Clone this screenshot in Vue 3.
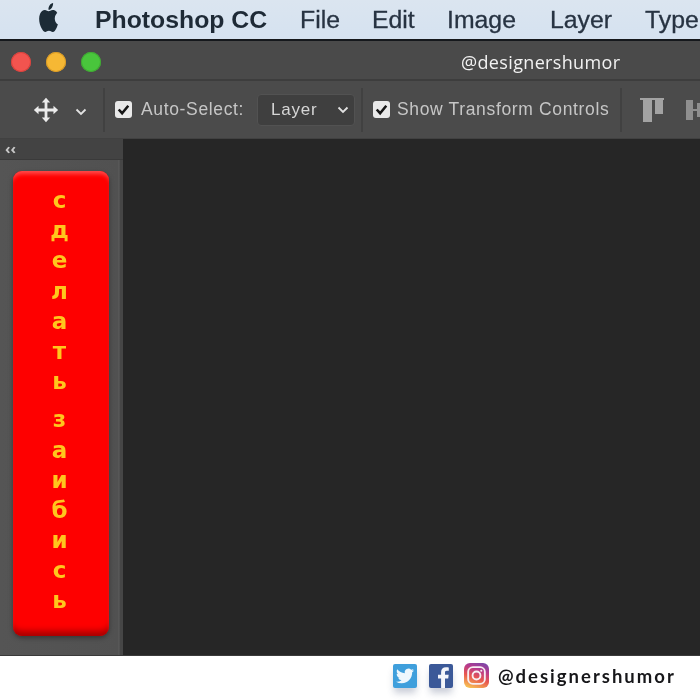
<script setup>
const word1 = ['с', 'д', 'е', 'л', 'а', 'т', 'ь']
const word2 = ['з', 'а', 'и', 'б', 'и', 'с', 'ь']
const menu = [
  { label: 'File', width: 72 },
  { label: 'Edit', width: 75 },
  { label: 'Image', width: 103 },
  { label: 'Layer', width: 95 },
  { label: 'Type', width: 60 }
]
</script>

<template>
  <div class="screen">
    <header class="menubar">
      <svg class="apple" viewBox="0 0 24 24" preserveAspectRatio="none" aria-hidden="true">
        <path d="M12.152 6.896c-.948 0-2.415-1.078-3.96-1.04-2.04.027-3.91 1.183-4.961 3.014-2.117 3.675-.546 9.103 1.519 12.09 1.013 1.454 2.208 3.09 3.792 3.039 1.52-.065 2.09-.987 3.935-.987 1.831 0 2.35.987 3.96.948 1.637-.026 2.676-1.48 3.676-2.948 1.156-1.688 1.636-3.325 1.662-3.415-.039-.013-3.182-1.221-3.22-4.857-.026-3.04 2.48-4.494 2.597-4.559-1.429-2.09-3.623-2.324-4.39-2.376-2-.156-3.675 1.09-4.61 1.09zM15.53 3.83c.843-1.012 1.4-2.427 1.245-3.83-1.207.052-2.662.805-3.532 1.818-.78.896-1.454 2.338-1.273 3.714 1.338.104 2.715-.688 3.559-1.701" />
      </svg>
      <span class="app-name">Photoshop CC</span>
      <span v-for="m in menu" :key="m.label" class="menu-item" :style="{ width: m.width + 'px' }">{{ m.label }}</span>
    </header>

    <div class="titlebar">
      <span class="light red"></span>
      <span class="light yellow"></span>
      <span class="light green"></span>
      <span class="handle">@designershumor</span>
    </div>

    <div class="toolbar">
      <svg class="move" viewBox="0 0 30 30" aria-hidden="true">
        <path d="M15 2l4.500 5h-3v6.500h6.500v-3l5 4.500-5 4.500v-3h-6.500v6.500h3l-4.500 5-4.500-5h3v-6.500h-6.500v3l-5-4.500 5-4.500v3h6.500v-6.500h-3z" />
      </svg>
      <svg class="chev chev-tool" viewBox="0 0 12 8" aria-hidden="true"><path d="M1.500 1.500L6 6l4.500-4.500" /></svg>
      <span class="sep sep-a"></span>
      <span class="check">
        <svg viewBox="0 0 16 16" aria-hidden="true"><path d="M3.500 8l3.200 3.500L12.500 4.500" /></svg>
      </span>
      <span class="tool-label auto">Auto-Select:</span>
      <div class="select">
        <span>Layer</span>
        <svg class="chev" viewBox="0 0 12 8" aria-hidden="true"><path d="M1.500 1.500L6 6l4.500-4.500" /></svg>
      </div>
      <span class="sep sep-b"></span>
      <span class="check">
        <svg viewBox="0 0 16 16" aria-hidden="true"><path d="M3.500 8l3.200 3.500L12.500 4.500" /></svg>
      </span>
      <span class="tool-label show">Show Transform Controls</span>
      <span class="sep sep-c"></span>
      <svg class="align-top" viewBox="0 0 24 24" aria-hidden="true">
        <path d="M0 0h24v2H0zM3 2h9v22H3zM15 2h8v14h-8z" />
      </svg>
      <svg class="align-mid" viewBox="0 0 18 24" aria-hidden="true">
        <path d="M0 2h7v20H0zM7 11h4v2H7zM11 5h7v14h-7z" />
      </svg>
    </div>

    <main class="workspace">
      <aside class="dock">
        <div class="dock-head">‹‹</div>
        <div class="dock-body">
          <div class="red-panel">
            <span v-for="(l, i) in word1" :key="'a' + i" class="letter">{{ l }}</span>
            <span class="word-gap"></span>
            <span v-for="(l, i) in word2" :key="'b' + i" class="letter">{{ l }}</span>
          </div>
        </div>
      </aside>
      <div class="canvas"></div>
    </main>

    <footer class="footer">
      <span class="social twitter">
        <svg viewBox="0 0 24 24" aria-hidden="true">
          <path d="M23.953 4.570a10 10 0 01-2.825.775 4.958 4.958 0 002.163-2.723c-.951.555-2.005.959-3.127 1.184a4.920 4.920 0 00-8.384 4.482C7.690 8.095 4.067 6.130 1.640 3.162a4.822 4.822 0 00-.666 2.475c0 1.710.870 3.213 2.188 4.096a4.904 4.904 0 01-2.228-.616v.060a4.923 4.923 0 003.946 4.827 4.996 4.996 0 01-2.212.085 4.936 4.936 0 004.604 3.417 9.867 9.867 0 01-6.102 2.105c-.390 0-.779-.023-1.170-.067a13.995 13.995 0 007.557 2.209c9.053 0 13.998-7.496 13.998-13.985 0-.210 0-.420-.015-.630A9.935 9.935 0 0024 4.590z" />
        </svg>
      </span>
      <span class="social facebook">
        <svg viewBox="0 0 24 24" aria-hidden="true">
          <path d="M16 24v-9.500h3.200l.5-3.700H16V8.500c0-1.100.3-1.800 1.800-1.800h2V3.400c-.4 0-1.500-.2-2.900-.2-2.900 0-4.800 1.700-4.800 5v2.600H9v3.700h3.100V24z" />
        </svg>
      </span>
      <span class="social instagram">
        <svg viewBox="0 0 24 24" aria-hidden="true">
          <rect x="4" y="4" width="16" height="16" rx="4.500" />
          <circle cx="12" cy="12" r="3.800" />
          <circle class="dot" cx="16.600" cy="7.400" r="1" />
        </svg>
      </span>
      <span class="footer-handle">@designershumor</span>
    </footer>
  </div>
</template>

<style scoped>
.screen {
  width: 700px;
  height: 700px;
  overflow: hidden;
  display: flex;
  flex-direction: column;
  background: #fff;
  font-family: "Open Sans", "Liberation Sans", sans-serif;
  filter: blur(0.5px);
}

/* menu bar */
.menubar {
  flex: 0 0 41px;
  box-sizing: border-box;
  display: flex;
  align-items: center;
  padding-left: 37px;
  background: linear-gradient(#dbe5f0, #d5e2f0);
  border-bottom: 2px solid #15181c;
  color: #1e2a36;
  white-space: nowrap;
  overflow: hidden;
}
.apple {
  width: 23px;
  height: 29px;
  margin-top: -5px;
  fill: #1c2b36;
  flex: none;
}
.app-name {
  flex: none;
  width: 205px;
  margin-left: 35px;
  font-family: "Liberation Sans", sans-serif;
  font-size: 24.800px;
  font-weight: 700;
}
.menu-item {
  flex: none;
  font-family: "Liberation Sans", sans-serif;
  font-size: 24.800px;
  color: #273342;
  -webkit-text-stroke: 0.300px #273342;
}

/* title bar */
.titlebar {
  flex: 0 0 40px;
  box-sizing: border-box;
  display: flex;
  align-items: center;
  padding: 4px 0 0 11px;
  gap: 15px;
  background: #4a4a4a;
  border-bottom: 2px solid #3d3d3d;
}
.light {
  width: 20px;
  height: 20px;
  border-radius: 50%;
  flex: none;
}
.red { background: #f2544f; box-shadow: inset 0 0 0 1px #d8413c; }
.yellow { background: #f6b834; box-shadow: inset 0 0 0 1px #d99a25; }
.green { background: #49c53c; box-shadow: inset 0 0 0 1px #3fa833; }
.handle {
  margin-left: 345px;
  color: #f2f2f2;
  font-size: 18px;
  letter-spacing: 0.350px;
}

/* toolbar */
.toolbar {
  flex: 0 0 58px;
  box-sizing: border-box;
  display: flex;
  align-items: center;
  background: #4b4b4b;
  border-bottom: 1px solid #414141;
  white-space: nowrap;
  overflow: hidden;
}
.move {
  width: 28px;
  height: 28px;
  margin-left: 32px;
  fill: #ececec;
  flex: none;
}
.chev {
  width: 12px;
  height: 8px;
  fill: none;
  stroke: #e2e2e2;
  stroke-width: 1.800;
  flex: none;
}
.chev-tool { margin-left: 15px; margin-top: 4px; }
.sep {
  width: 2px;
  height: 44px;
  background: #414141;
  flex: none;
}
.sep-a { margin-left: 16px; }
.sep-b { margin-left: 6px; }
.sep-c { margin-left: 10px; }
.check {
  width: 17px;
  height: 17px;
  border-radius: 3px;
  background: #e9e9e9;
  flex: none;
  display: flex;
}
.check svg {
  width: 17px;
  height: 17px;
  fill: none;
  stroke: #161616;
  stroke-width: 2.400;
}
.sep-a + .check { margin-left: 10px; }
.sep-b + .check { margin-left: 10px; }
.tool-label {
  flex: none;
  color: #c6c6c6;
  font-family: "Liberation Sans", sans-serif;
  font-size: 17.500px;
  letter-spacing: 0.650px;
}
.auto { margin-left: 9px; width: 110px; }
.show { margin-left: 7px; width: 213px; }
.select {
  width: 98px;
  height: 32px;
  margin-left: 6px;
  padding: 0 5px 0 13px;
  box-sizing: border-box;
  display: flex;
  align-items: center;
  justify-content: space-between;
  background: #3f3f3f;
  border: 1px solid #525252;
  border-radius: 4px;
  color: #d6d6d6;
  font-family: "Liberation Sans", sans-serif;
  font-size: 17px;
  letter-spacing: 0.800px;
  flex: none;
}
.align-top {
  width: 24px;
  height: 24px;
  margin-left: 18px;
  fill: #a3a3a3;
  flex: none;
}
.align-mid {
  width: 18px;
  height: 24px;
  margin-left: 22px;
  fill: #8f8f8f;
  flex: none;
}

/* workspace */
.workspace {
  flex: 0 0 516px;
  display: flex;
  background: #262626;
}
.dock {
  width: 123px;
  flex: none;
  display: flex;
  flex-direction: column;
  background: #484848;
}
.dock-head {
  height: 21px;
  box-sizing: border-box;
  padding: 0 0 3px 5px;
  font-size: 15px;
  line-height: 18px;
  font-weight: 700;
  color: #c8c8c8;
  background: #434343;
  border-bottom: 1px solid #3a3a3a;
}
.dock-body {
  flex: 1;
  box-sizing: border-box;
  padding: 11px 0 19px 13px;
  background: linear-gradient(90deg, #555 0, #515151 118px, #5d5d5d 119px, #464646 120px);
}
.red-panel {
  width: 96px;
  height: 465px;
  box-sizing: border-box;
  padding: 14px 3px 0 0;
  display: flex;
  flex-direction: column;
  align-items: center;
  border-radius: 9px;
  background: #fe0000;
  box-shadow: inset 0 5px 4px -2px #ff4c4c, inset 0 -8px 6px -3px #a80000, 0 2px 5px rgba(0, 0, 0, 0.35);
}
.letter {
  height: 30.200px;
  line-height: 30px;
  font-family: "DejaVu Sans", "Noto Sans", sans-serif;
  font-size: 23px;
  font-weight: 700;
  color: #ffc61d;
}
.word-gap { height: 8px; flex: none; }
.canvas {
  flex: 1;
  background: #262626;
}

/* footer */
.footer {
  flex: 0 0 45px;
  box-sizing: border-box;
  display: flex;
  align-items: center;
  padding: 0 0 5px 393px;
  background: #fff;
  border-top: 1px solid #3a3a3a;
}
.social {
  width: 24px;
  height: 24px;
  flex: none;
  display: flex;
  align-items: center;
  justify-content: center;
  box-shadow: 0 6px 7px -1px rgba(60, 75, 110, 0.28);
}
.twitter { background: #3f9fdc; border-radius: 2px; }
.twitter svg { width: 18px; height: 18px; fill: #eef7fd; }
.facebook { margin-left: 12px; background: #3b5998; border-radius: 2px; overflow: hidden; }
.facebook svg { width: 24px; height: 24px; fill: #f3f5fa; }
.instagram {
  width: 25px;
  height: 25px;
  margin-left: 11px;
  border-radius: 6px;
  background: linear-gradient(20deg, #f8c654 5%, #e8574f 42%, #b7398c 70%, #6b4bb0 100%);
  box-shadow: none;
}
.instagram svg {
  width: 25px;
  height: 25px;
  fill: none;
  stroke: #f7eef2;
  stroke-width: 1.800;
}
.instagram .dot { fill: #f7eef2; stroke: none; }
.footer-handle {
  margin-left: 9px;
  font-family: "Lato", "Open Sans", sans-serif;
  font-size: 18.500px;
  font-weight: 700;
  letter-spacing: 2px;
  color: #17171a;
  white-space: nowrap;
}
</style>
